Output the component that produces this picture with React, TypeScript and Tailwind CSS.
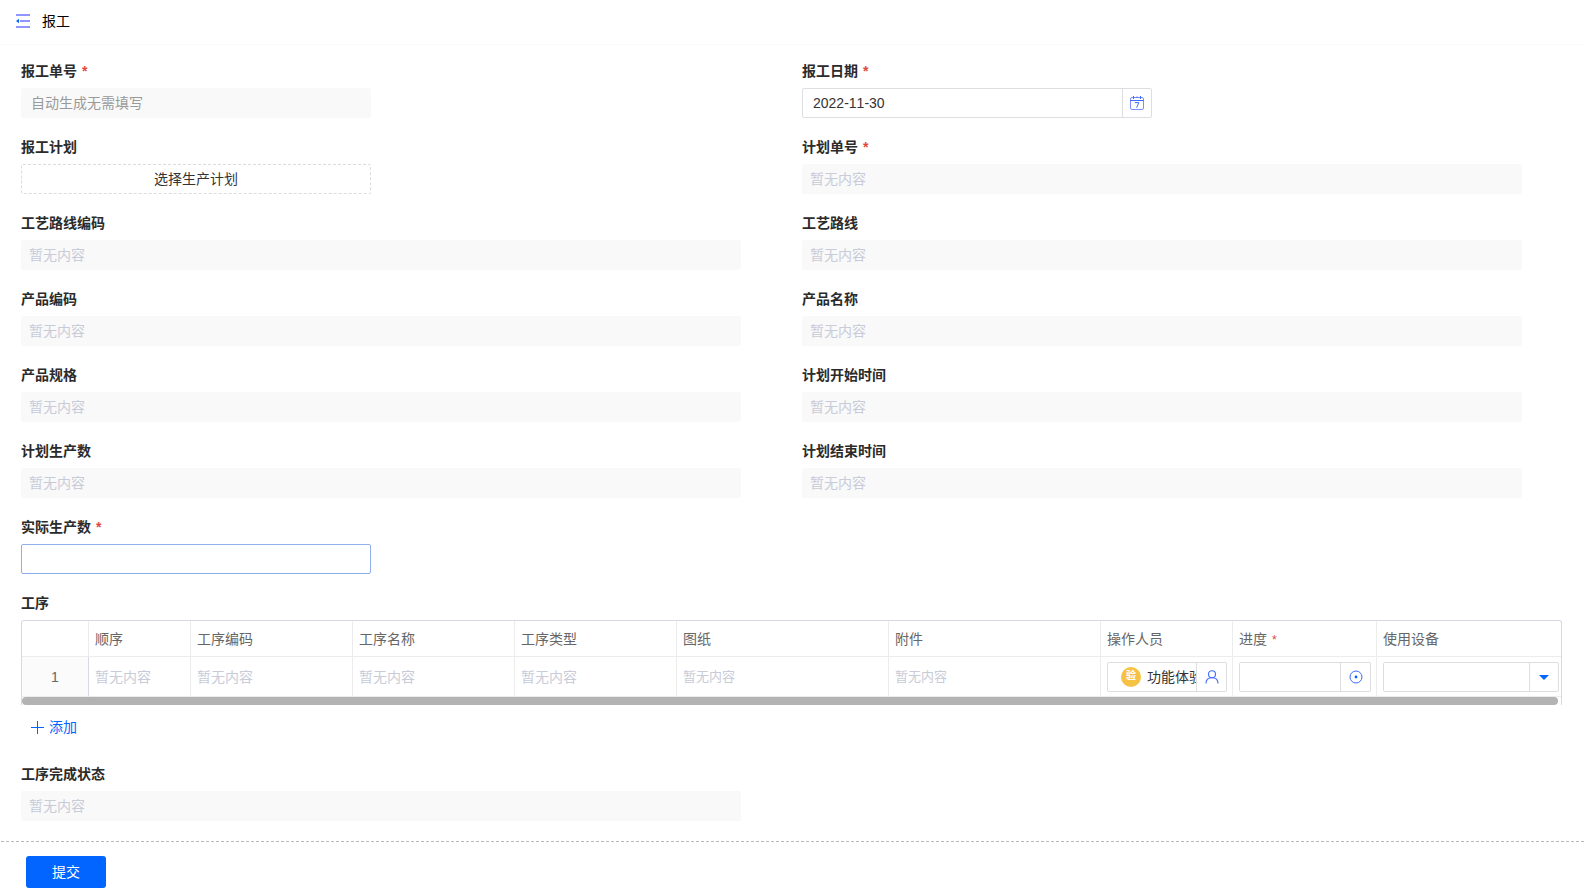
import React, { useState } from "react";

interface FieldProps {
  id: string;
  label: string;
  required?: boolean;
  children?: React.ReactNode;
}

interface ColumnDef {
  key: string;
  title: string;
  width: string;
  required?: boolean;
}

const columns: ColumnDef[] = [
  { key: "order", title: "顺序", width: "w-[102px]" },
  { key: "code", title: "工序编码", width: "w-[162px]" },
  { key: "name", title: "工序名称", width: "w-[162px]" },
  { key: "type", title: "工序类型", width: "w-[162px]" },
  { key: "drawing", title: "图纸", width: "w-[212px]" },
  { key: "attachment", title: "附件", width: "w-[212px]" },
  { key: "operator", title: "操作人员", width: "w-[132px]" },
  { key: "progress", title: "进度", width: "w-[144px]", required: true },
  { key: "device", title: "使用设备", width: "" },
];

function Field({ id, label, required, children }: FieldProps) {
  return (
    <div className="pr-[61px] pb-[19px]">
      <label
        htmlFor={id}
        className="mb-[7px] block h-5 text-sm/5 font-bold text-[#2b2b2b]"
      >
        {label}
        {required && <span className="ml-[5px] text-[#e0483e]">*</span>}
      </label>
      {children ?? (
        <input
          id={id}
          readOnly
          placeholder="暂无内容"
          className="block h-[30px] w-full rounded-xs bg-[#f9f9f9] px-2 text-sm text-gray-800 outline-none placeholder:text-[#c8cbd8]"
        />
      )}
    </div>
  );
}

function MenuIcon() {
  return (
    <svg width="14" height="14" viewBox="0 0 14 14" fill="none">
      <path d="M0 1H14M4 7H14M0 13H14" stroke="#8f96ff" strokeWidth="2" />
      <path d="M0 7L3 4.8V9.2Z" fill="#0265ff" />
    </svg>
  );
}

function CalendarIcon() {
  return (
    <svg width="14" height="14" viewBox="0 0 14 14" fill="none" stroke="#3f6bff">
      <rect x="0.5" y="1.5" width="13" height="12" rx="1.5" stroke="#7d8cff" />
      <path d="M0.5 4.5H13.5M3.5 0V3M10.5 0V3M7 0.5V2" />
      <path d="M4.8 6.6H8.8L6.6 11.8" />
    </svg>
  );
}

function UserIcon() {
  return (
    <svg width="14" height="14" viewBox="0 0 14 14" fill="none" stroke="#3f6bff" strokeWidth="1.1">
      <circle cx="7" cy="4.2" r="3.5" />
      <path d="M1 13.5C1 10 3.2 7.8 7 7.8S13 10 13 13.5" />
    </svg>
  );
}

function TargetIcon() {
  return (
    <svg width="14" height="14" viewBox="0 0 14 14" fill="none">
      <circle cx="7" cy="7" r="6" stroke="#3f6bff" />
      <circle cx="7" cy="7" r="1.4" fill="#0265ff" />
    </svg>
  );
}

export default function App() {
  const [date, setDate] = useState("2022-11-30");
  const [actual, setActual] = useState("");
  const [progress, setProgress] = useState("");

  return (
    <div className="bg-white font-['Liberation_Sans','Noto_Sans_CJK_SC',sans-serif] text-sm text-[#333]">
      {/* Header */}
      <header className="flex h-[45px] items-center gap-3 border-b border-[#fafafa] px-4 pb-0.5">
        <button type="button" aria-label="菜单">
          <MenuIcon />
        </button>
        <h1 className="text-sm text-black">报工</h1>
      </header>

      <form onSubmit={(e) => e.preventDefault()}>
        <div className="pt-4 pr-px pl-[21px]">
          <div className="grid grid-cols-2">
            <Field id="no" label="报工单号" required>
              <input
                id="no"
                readOnly
                placeholder="自动生成无需填写"
                className="block h-[30px] w-[350px] rounded-xs bg-[#f9f9f9] px-2.5 text-sm outline-none placeholder:text-[#999]"
              />
            </Field>
            <Field id="date" label="报工日期" required>
              <div className="flex h-[30px] w-[350px] rounded-xs border border-[#dcdee2]">
                <input
                  id="date"
                  value={date}
                  onChange={(e) => setDate(e.target.value)}
                  className="min-w-0 flex-1 px-2.5 text-sm outline-none [font-kerning:none]"
                />
                <button
                  type="button"
                  aria-label="选择日期"
                  className="flex w-[29px] items-center justify-center border-l border-[#dcdee2]"
                >
                  <CalendarIcon />
                </button>
              </div>
            </Field>
            <Field id="plan" label="报工计划">
              <button
                id="plan"
                type="button"
                className="block h-[30px] w-[350px] rounded-xs border border-dashed border-[#dcdcdc] text-sm"
              >
                选择生产计划
              </button>
            </Field>
            <Field id="planNo" label="计划单号" required />
            <Field id="routeCode" label="工艺路线编码" />
            <Field id="route" label="工艺路线" />
            <Field id="productCode" label="产品编码" />
            <Field id="productName" label="产品名称" />
            <Field id="spec" label="产品规格" />
            <Field id="start" label="计划开始时间" />
            <Field id="planCount" label="计划生产数" />
            <Field id="end" label="计划结束时间" />
            <Field id="actual" label="实际生产数" required>
              <input
                id="actual"
                value={actual}
                onChange={(e) => setActual(e.target.value)}
                className="block h-[30px] w-[350px] rounded-xs border border-[#8fb0ea] px-2.5 text-sm outline-none"
              />
            </Field>
          </div>

          {/* Process table */}
          <div className="pr-[21px]">
            <h2 className="mb-[7px] h-5 text-sm/5 font-bold text-[#2b2b2b]">工序</h2>
            <div className="rounded-t-[3px] border border-b-0 border-[#d9d9e6]">
              <table className="w-full table-fixed border-separate border-spacing-0 text-left">
                <thead>
                  <tr className="h-9 text-[#666]">
                    <th className="w-[67px] border-r border-b border-[#ececec]" />
                    {columns.map((col) => (
                      <th
                        key={col.key}
                        className={`${col.width} border-r border-b border-[#ececec] pl-1.5 font-normal last:border-r-0`}
                      >
                        {col.title}
                        {col.required && (
                          <span className="ml-[5px] text-xs text-[#e0483e]">*</span>
                        )}
                      </th>
                    ))}
                  </tr>
                </thead>
                <tbody>
                  <tr className="h-10 text-[#c8cbd8] *:border-r *:border-b *:border-[#ececec] *:pl-1.5">
                    <td className="border-r-[#d9d9e6]! bg-[#fbfbfb] pl-0! text-center text-[#666]">
                      1
                    </td>
                    <td>暂无内容</td>
                    <td>暂无内容</td>
                    <td>暂无内容</td>
                    <td>暂无内容</td>
                    <td className="text-[13px]/5">暂无内容</td>
                    <td className="text-[13px]/5">暂无内容</td>
                    <td className="pr-[5px]">
                      <div className="flex h-[30px] rounded-xs border border-[#dcdee2] text-[#333]">
                        <div className="flex min-w-0 flex-1 items-center gap-1.5 overflow-hidden pl-[13px] whitespace-nowrap">
                          <span className="flex size-5 shrink-0 items-center justify-center rounded-full bg-[#f6c244] text-[10px] font-bold text-white">
                            验
                          </span>
                          <span>功能体验</span>
                        </div>
                        <button
                          type="button"
                          aria-label="选择人员"
                          className="flex w-[30px] items-center justify-center border-l border-[#dcdee2]"
                        >
                          <UserIcon />
                        </button>
                      </div>
                    </td>
                    <td className="pr-[5px]">
                      <div className="flex h-[30px] rounded-xs border border-[#dcdee2] text-[#333]">
                        <input
                          aria-label="进度"
                          value={progress}
                          onChange={(e) => setProgress(e.target.value)}
                          className="min-w-0 flex-1 px-2 outline-none"
                        />
                        <button
                          type="button"
                          aria-label="选择进度"
                          className="flex w-[30px] items-center justify-center border-l border-[#dcdee2]"
                        >
                          <TargetIcon />
                        </button>
                      </div>
                    </td>
                    <td className="border-r-0! pr-0.5">
                      <div className="relative flex h-[30px] rounded-xs border border-[#dcdee2] text-[#333]">
                        <select
                          aria-label="使用设备"
                          className="min-w-0 flex-1 appearance-none px-2 outline-none"
                        >
                          <option value="" />
                        </select>
                        <span className="pointer-events-none absolute inset-y-0 right-0 flex w-[29px] items-center justify-center border-l border-[#dcdee2]">
                          <svg width="10" height="6" viewBox="0 0 10 6">
                            <path d="M0 1H10L5 6Z" fill="#0265ff" />
                          </svg>
                        </span>
                      </div>
                    </td>
                  </tr>
                </tbody>
              </table>
              <div className="mr-[3px] h-2 rounded-full bg-[#b3b3b3]" />
            </div>
            <button
              type="button"
              className="mt-3 mb-[27px] ml-2.5 flex h-5 items-center gap-[5px] text-[#0265ff]"
            >
              <svg width="13" height="13" viewBox="0 0 13 13" stroke="#0265ff">
                <path d="M6.5 0V13M0 6.5H13" />
              </svg>
              添加
            </button>
          </div>

          <div className="grid grid-cols-2">
            <Field id="status" label="工序完成状态" />
          </div>
        </div>

        {/* Footer */}
        <footer className="mt-px ml-px border-t border-dashed border-[#bbb] px-[25px] pt-3.5">
          <button
            type="submit"
            className="block h-8 w-20 rounded-[3px] bg-[#0265ff] text-white"
          >
            提交
          </button>
        </footer>
      </form>
    </div>
  );
}
